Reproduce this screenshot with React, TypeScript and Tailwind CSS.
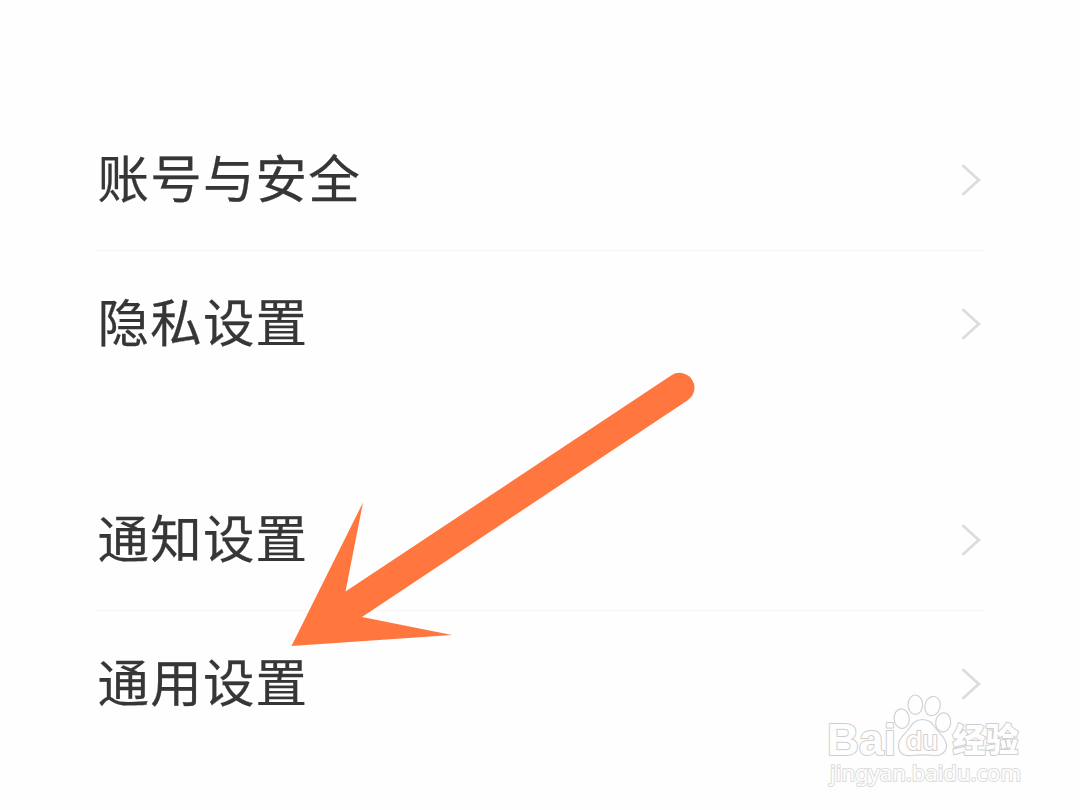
import React from 'react';

interface SettingItem {
  key: string;
  label: string;
}

const GROUPS: SettingItem[][] = [
  [
    { key: 'account', label: '账号与安全' },
    { key: 'privacy', label: '隐私设置' },
  ],
  [
    { key: 'notice', label: '通知设置' },
    { key: 'general', label: '通用设置' },
  ],
];

export default function App() {
  return (
    <div className="relative w-[1080px] h-[810px] overflow-hidden bg-[#fefefe] font-['Noto_Sans_CJK_SC',sans-serif]">
      {/* Settings list */}
      <div className="flex flex-col gap-[72px] pt-[107px] pl-24 pr-[95px]">
        {GROUPS.map((group, i) => (
          <div key={i} className="flex flex-col">
            {group.map((item, index) => (
              <SettingRow key={item.key} label={item.label} divider={index < group.length - 1} />
            ))}
          </div>
        ))}
      </div>

      <Arrow />
      <Watermark />
    </div>
  );
}

function SettingRow({ label, divider }: { label: string; divider: boolean }) {
  return (
    <button
      className={`flex h-36 w-full items-center justify-between border-b pt-[3px] text-left ${
        divider ? 'border-[#f5f5f5]' : 'border-transparent'
      }`}
    >
      <span className="mb-[9px] pl-[1.5px] text-[51.5px] leading-[72px] tracking-[1.2px] text-[#363636] [-webkit-text-stroke:0.25px_#363636]">
        {label}
      </span>
      <svg width="24" height="40" viewBox="0 0 24 40" fill="none">
        <path d="M1.5 5.2L17.8 20L1.5 34.8" stroke="#dcdcdc" strokeWidth="2.8" />
      </svg>
    </button>
  );
}

// Pointer over the list, aimed at the last row
function Arrow() {
  return (
    <svg className="absolute left-0 top-0" width="1080" height="810" viewBox="0 0 1080 810">
      <path
        d="M291.5 646L363 502.5L345.5 591.5L671.5 375.3A14.7 14.7 0 0 1 687.7 400.2L362 617L452 635Z"
        fill="#ff763f"
      />
    </svg>
  );
}

function Watermark() {
  return (
    <svg className="absolute left-[820px] top-[690px]" width="220" height="110" viewBox="0 0 220 110">
      <g fill="#fefefe" stroke="#d2d2d2" strokeWidth="1.2">
        <ellipse cx="95.3" cy="14.8" rx="7.3" ry="9.8" />
        <ellipse cx="112.5" cy="16" rx="7.6" ry="9.8" transform="rotate(14 112.5 16)" />
        <ellipse cx="81.7" cy="28.7" rx="7.6" ry="9.8" transform="rotate(-6 81.7 28.7)" />
        <ellipse cx="123.2" cy="32.4" rx="7.5" ry="9.6" transform="rotate(8 123.2 32.4)" />
        <path d="M102.5 29.5C94 29.5 91.5 35 88 40C84 45 78.5 48 78.5 55.5C78.5 63 84 66.5 91 65.5C99 64.5 106 64.5 114 65.5C121 66.5 126.5 62 126.5 55.5C126.5 49 121 45 117 40C113.5 35 111 29.5 102.5 29.5Z" />
      </g>
      <g fill="#fefefe" stroke="#cfcfcf" strokeWidth="2" strokeLinejoin="round" paintOrder="stroke">
        <text x="7" y="64.5" fontFamily="Liberation Sans, sans-serif" fontSize="44" fontWeight="bold" textLength="69" lengthAdjust="spacingAndGlyphs">Bai</text>
        <text x="86" y="59.5" fontFamily="Inter, sans-serif" fontSize="26" fontWeight="500" textLength="32" lengthAdjust="spacingAndGlyphs">du</text>
        <text x="132.5" y="61.5" fontFamily="Noto Sans CJK SC, sans-serif" fontSize="33" fontWeight="900" textLength="66" lengthAdjust="spacingAndGlyphs">经验</text>
        <text x="10" y="90.5" fontFamily="Noto Sans, sans-serif" fontSize="22" stroke="#dcdcdc" textLength="191" lengthAdjust="spacingAndGlyphs">jingyan.baidu.com</text>
      </g>
    </svg>
  );
}
